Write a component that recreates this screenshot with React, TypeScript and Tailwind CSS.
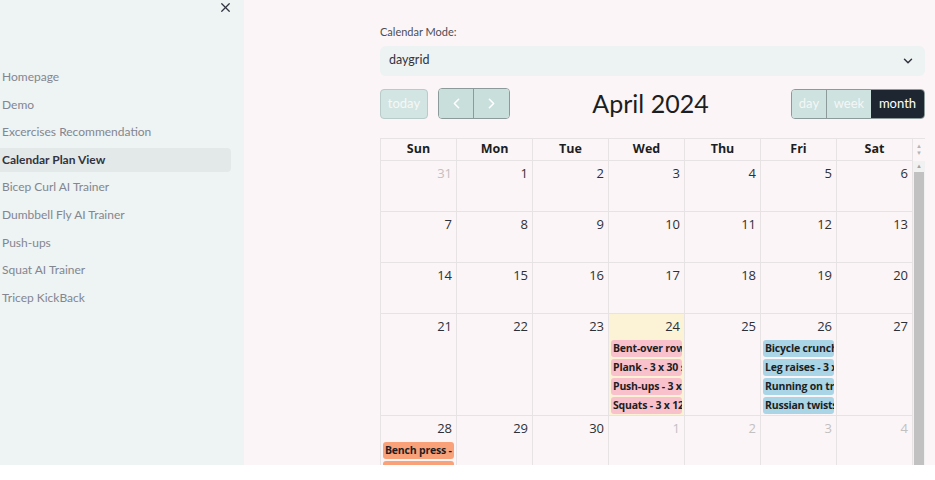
import { ChevronDown, ChevronLeft, ChevronRight, X } from 'lucide-react';

const navItems = [
  'Homepage',
  'Demo',
  'Excercises Recommendation',
  'Calendar Plan View',
  'Bicep Curl AI Trainer',
  'Dumbbell Fly AI Trainer',
  'Push-ups',
  'Squat AI Trainer',
  'Tricep KickBack',
];

const days = ['Sun', 'Mon', 'Tue', 'Wed', 'Thu', 'Fri', 'Sat'];

type Ev = { title: string; color: string };

const pink = 'bg-[#f9c1cc]';
const blue = 'bg-[#a9d5e6]';
const orange = 'bg-[#f9a27a]';

const events: Record<string, Ev[]> = {
  '24': [
    { title: 'Bent-over rows - 3 x 12', color: pink },
    { title: 'Plank - 3 x 30 sec', color: pink },
    { title: 'Push-ups - 3 x 15', color: pink },
    { title: 'Squats - 3 x 12', color: pink },
  ],
  '26': [
    { title: 'Bicycle crunches - 3 x 20', color: blue },
    { title: 'Leg raises - 3 x 15', color: blue },
    { title: 'Running on treadmill - 30 min', color: blue },
    { title: 'Russian twists - 3 x 20', color: blue },
  ],
  '28': [
    { title: 'Bench press - 3 x 10', color: orange },
    { title: 'Deadlifts - 3 x 8', color: orange },
  ],
};

const weeks: { n: number; other?: boolean }[][] = [
  [{ n: 31, other: true }, { n: 1 }, { n: 2 }, { n: 3 }, { n: 4 }, { n: 5 }, { n: 6 }],
  [{ n: 7 }, { n: 8 }, { n: 9 }, { n: 10 }, { n: 11 }, { n: 12 }, { n: 13 }],
  [{ n: 14 }, { n: 15 }, { n: 16 }, { n: 17 }, { n: 18 }, { n: 19 }, { n: 20 }],
  [{ n: 21 }, { n: 22 }, { n: 23 }, { n: 24 }, { n: 25 }, { n: 26 }, { n: 27 }],
  [{ n: 28 }, { n: 29 }, { n: 30 }, { n: 1, other: true }, { n: 2, other: true }, { n: 3, other: true }, { n: 4, other: true }],
];

function Sidebar() {
  return (
    <div className="relative w-[244px] shrink-0 bg-[#eef3f3] pt-[65px] font-['Lato',sans-serif]">
      <button className="absolute left-[218px] top-0 text-[#31333f]">
        <X size={15} strokeWidth={2} />
      </button>
      <nav className="flex flex-col pr-[13px]">
        {navItems.map((item) => {
          const active = item === 'Calendar Plan View';
          return (
            <div
              key={item}
              className={
                'flex h-[24px] items-center rounded-r-[4px] pl-[2px] text-[12px] mb-[3.6px] ' +
                (active ? 'bg-[#e3e9e9] font-bold text-[#31333f]' : 'text-[#838690]')
              }
            >
              {item}
            </div>
          );
        })}
      </nav>
    </div>
  );
}

function Toolbar() {
  return (
    <div className="flex h-[30px] items-center justify-between">
      <div className="flex items-center gap-[10px]">
        <button className="h-[30px] w-[48px] rounded-[4px] border border-[#b9cbc9] bg-[#d3e5e2] text-[13px] text-[#f5f8f8]">
          today
        </button>
        <div className="flex h-[31px] overflow-hidden rounded-[4px] border border-[#8c9a99]">
          <button className="flex w-[35px] items-center justify-center border-r border-[#8c9a99] bg-[#c9dfdc] text-white">
            <ChevronLeft size={17} strokeWidth={2.2} />
          </button>
          <button className="flex w-[35px] items-center justify-center bg-[#c9dfdc] text-white">
            <ChevronRight size={17} strokeWidth={2.2} />
          </button>
        </div>
      </div>
      <div className="text-[25px] leading-none text-[#1c1e22]">April 2024</div>
      <div className="flex h-[30px] overflow-hidden rounded-[4px] border border-[#8c9a99] text-[13px]">
        <button className="w-[35px] border-r border-[#8c9a99] bg-[#cee2df] text-[#f3f7f7]">day</button>
        <button className="w-[44px] bg-[#cee2df] text-[#f3f7f7]">week</button>
        <button className="w-[53px] bg-[#1e2731] text-white">month</button>
      </div>
    </div>
  );
}

function Calendar() {
  return (
    <div className="mt-[19px] font-['Open_Sans',sans-serif]">
      <div className="flex border-t border-l border-[#e7e3e5]">
        <div className="grid flex-1 grid-cols-7">
          {days.map((d) => (
            <div
              key={d}
              className="flex h-[22px] items-center justify-center border-r border-b border-[#e7e3e5] text-[12.5px] font-bold text-[#1c1e22]"
            >
              {d}
            </div>
          ))}
        </div>
        <div className="flex w-[12px] flex-col items-center justify-center gap-[1px] text-[#b4b4b4]">
          <span className="text-[6px] leading-none">▲</span>
          <span className="text-[6px] leading-none">▼</span>
        </div>
      </div>
      <div className="flex h-[305px] overflow-hidden border-l border-[#e7e3e5]">
        <div className="flex flex-1 flex-col">
          {weeks.map((week, wi) => (
            <div key={wi} className="grid shrink-0 grid-cols-7">
              {week.map((day, di) => {
                const isToday = !day.other && day.n === 24;
                const evs = day.other ? [] : events[String(day.n)] || [];
                return (
                  <div
                    key={di}
                    className={
                      'flex min-h-[51px] flex-col border-r border-b border-[#e7e3e5] ' +
                      (isToday ? 'bg-[#fcf3d6]' : '')
                    }
                  >
                    <div
                      className={
                        'h-[26px] pr-[4px] pt-[3px] text-right text-[13px] ' +
                        (day.other ? 'text-[#c2c0c1]' : 'text-[#2f3033]')
                      }
                    >
                      {day.n}
                    </div>
                    {evs.length > 0 && (
                      <div className="flex flex-col gap-[2px] px-[2px] pb-[1px]">
                        {evs.map((ev) => (
                          <div
                            key={ev.title}
                            className={
                              'h-[17px] overflow-hidden whitespace-nowrap rounded-[3px] px-[2px] text-[10.5px] font-bold leading-[17px] tracking-[-0.2px] text-[#1c1e22] ' +
                              ev.color
                            }
                          >
                            {ev.title}
                          </div>
                        ))}
                      </div>
                    )}
                  </div>
                );
              })}
            </div>
          ))}
        </div>
        <div className="flex w-[12px] flex-col bg-[#f1f1f1]">
          <div className="flex h-[11px] items-center justify-center text-[6px] leading-none text-[#a3a3a3]">▲</div>
          <div className="mx-[1px] flex-1 bg-[#c1c1c1]" />
        </div>
      </div>
    </div>
  );
}

export default function App() {
  return (
    <div className="h-[480px] w-[935px] bg-white">
      <div className="flex h-[465px] overflow-hidden">
        <Sidebar />
        <main className="flex-1 bg-[#fbf5f7] pl-[136px] pr-[10px] pt-[24px] font-['Lato',sans-serif]">
          <div className="mb-[5px] text-[11px] text-[#4b4d55]">Calendar Mode:</div>
          <div className="flex h-[30px] items-center justify-between rounded-[6px] bg-[#edf2f2] pl-[9px] pr-[10px] text-[12.5px] text-[#31333f]">
            <span>daygrid</span>
            <ChevronDown size={14} strokeWidth={2.5} />
          </div>
          <div className="mt-[13px]">
            <Toolbar />
          </div>
          <Calendar />
        </main>
      </div>
    </div>
  );
}
